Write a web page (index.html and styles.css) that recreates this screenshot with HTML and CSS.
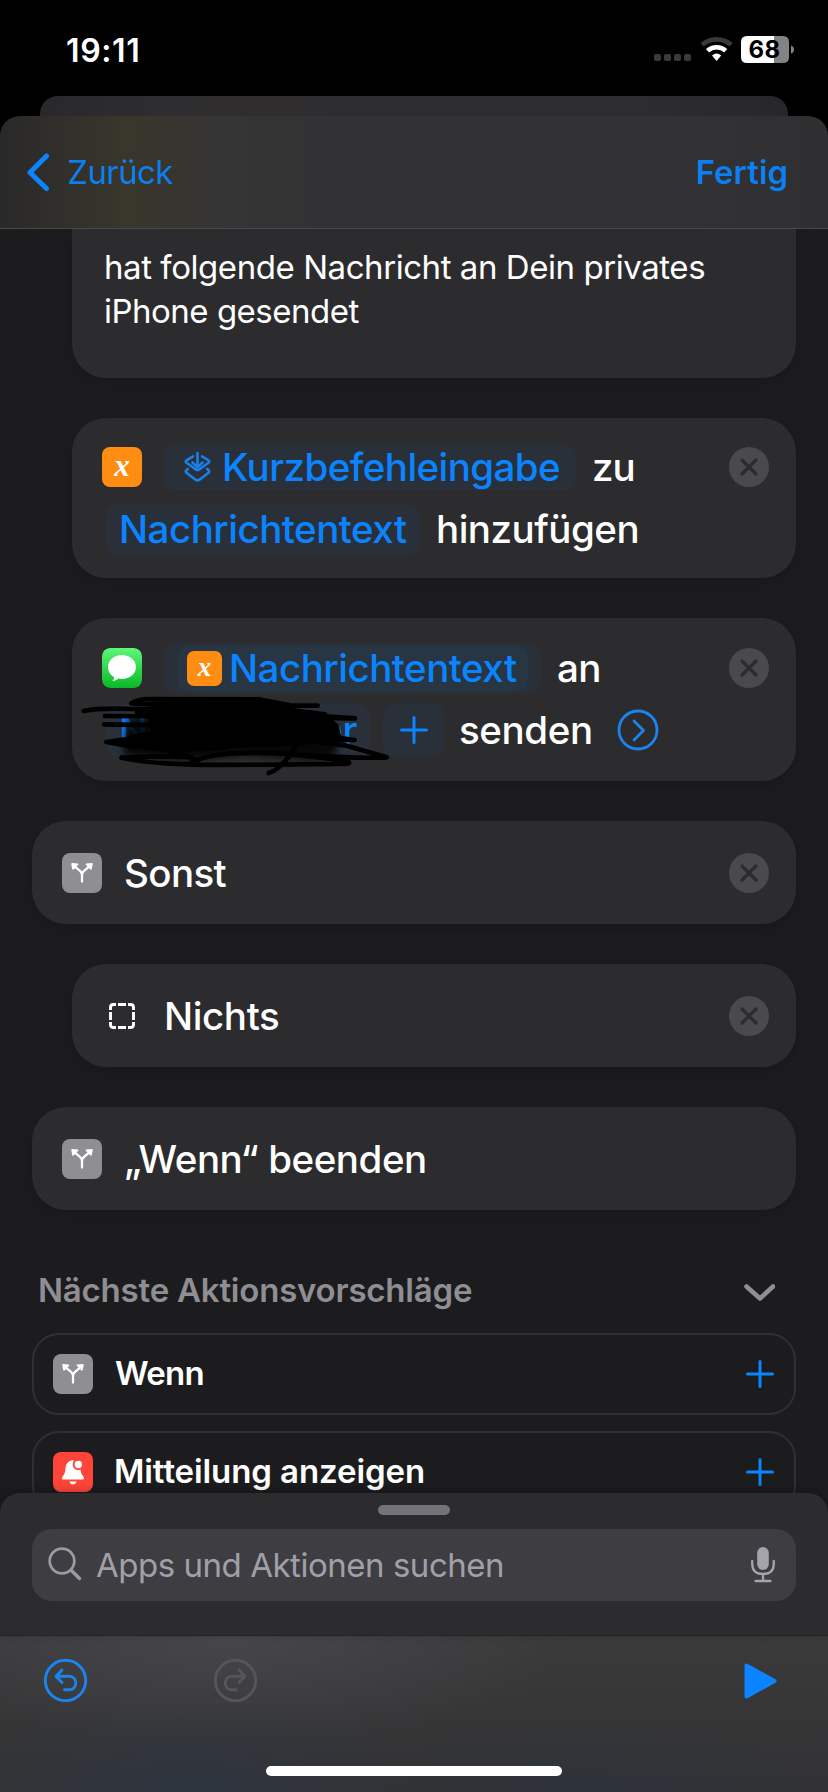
FILE: index.html
```html
<!DOCTYPE html>
<html lang="de">
<head>
<meta charset="utf-8">
<title>Kurzbefehle</title>
<link rel="stylesheet" href="styles.css">
</head>
<body>
<svg class="defs" width="0" height="0" aria-hidden="true">
  <symbol id="branch" viewBox="0 0 40 40">
    <path d="M20 28.5V22Q20 19.5 18 17.8L13.5 14.2M20 22Q20 19.5 22 17.8L26.500 14.200" fill="none" stroke="#fff" stroke-width="2.300" stroke-linecap="round"/>
    <path d="M9.300 11.300Q9 10 10.300 10L15.800 10.400Q17 10.700 16.200 11.700L11.600 16.400Q10.600 17.200 10.200 16Z M30.700 11.300Q31 10 29.700 10L24.200 10.400Q23 10.700 23.800 11.700L28.400 16.400Q29.400 17.200 29.800 16Z" fill="#fff"/>
  </symbol>
  <symbol id="close" viewBox="0 0 40 40">
    <circle cx="20" cy="20" r="20" fill="#4a4a4d"/>
    <path d="M13 13L27 27M27 13L13 27" stroke="#2c2c2e" stroke-width="3.200" stroke-linecap="round"/>
  </symbol>
  <symbol id="plus" viewBox="0 0 28 28">
    <path d="M14 1.500V26.500M1.500 14H26.500" stroke="#0a84ff" stroke-width="3" stroke-linecap="round"/>
  </symbol>
</svg>

<div class="phone">
  <header class="status">
    <span class="clock">19:11</span>
    <svg class="status-icons" width="144" height="30" viewBox="0 0 144 30">
      <g fill="#3a3a3a">
        <rect x="1" y="19" width="7" height="7" rx="2"/><rect x="11" y="19" width="7" height="7" rx="2"/>
        <rect x="21" y="19" width="7" height="7" rx="2"/><rect x="31" y="19" width="7" height="7" rx="2"/>
      </g>
      <g fill="none">
        <path d="M49 9.800A22.300 22.300 0 0 1 78.200 9.800" stroke="#3a3a3a" stroke-width="4.600"/>
        <path d="M54.500 15.800A13.600 13.600 0 0 1 72.700 15.800" stroke="#fff" stroke-width="4.600"/>
      </g>
      <path d="M59 20.500Q63.600 16.700 68.200 20.500L63.600 26Z" fill="#fff"/>
      <path d="M94 1H121V28H94Q88 28 88 22V7Q88 1 94 1Z" fill="#fff"/>
      <path d="M121 1H130Q136 1 136 7V22Q136 28 130 28H121Z" fill="#838383"/>
      <path d="M138 10.500Q141 11.500 141 14.500T138 18.500Z" fill="#838383"/>
      <text x="95.500" y="23.300" class="battery">68</text>
    </svg>
  </header>
  <div class="back-sheet"></div>
  <nav class="nav">
    <svg width="24" height="40" viewBox="0 0 24 40"><path d="M20.500 4L4 20.500L20.500 36.500" fill="none" stroke="#0a84ff" stroke-width="5" stroke-linecap="round" stroke-linejoin="round"/></svg>
    <span class="back">Zurück</span>
    <span class="done">Fertig</span>
  </nav>

  <main class="content">
    <section class="card card-text">hat folgende Nachricht an Dein privates<br><span class="tight">iPhone gesendet</span></section>

    <section class="card card-append">
      <div class="row">
        <span class="icon orange"><i>x</i></span>
        <span class="pill pill-input">
          <svg width="27" height="32" viewBox="0 0 27 32" fill="none" stroke="#1a7fe6" stroke-width="2.600" stroke-linecap="round" stroke-linejoin="round">
            <path d="M13.500 2V16M8.500 11.500L13.500 16.500L18.500 11.500"/>
            <path d="M9 5.300L2.500 9.400Q1 10.600 2.500 11.800L11.500 18.300Q13.500 19.600 15.500 18.300L24.500 11.800Q26 10.600 24.500 9.400L18 5.300"/>
            <path d="M3.800 18L2.500 19.200Q1 20.600 2.500 21.800L11.500 28.700Q13.500 30 15.500 28.700L24.500 21.800Q26 20.600 24.500 19.200L23.200 18"/>
          </svg>
          <span>Kurzbefehleingabe</span>
        </span>
        <span class="word zu">zu</span>
        <svg class="close" width="40" height="40"><use href="#close"/></svg>
      </div>
      <div class="row second">
        <span class="pill pill-var">Nachrichtentext</span>
        <span class="word">hinzufügen</span>
      </div>
    </section>

    <section class="card card-send">
      <div class="row">
        <svg class="icon" width="40" height="40" viewBox="0 0 40 40">
          <defs><linearGradient id="green" x2="0" y2="1"><stop offset="0" stop-color="#5ff777"/><stop offset="1" stop-color="#09b827"/></linearGradient></defs>
          <rect width="40" height="40" rx="8" fill="url(#green)"/>
          <path d="M20 7C12.200 7 6 12.200 6 19C6 23.300 8.400 26.900 12 29C12.200 30.800 11.500 32 10.200 33C12.800 32.900 15 32 16.300 30.600C17.500 30.900 18.700 31 20 31C27.800 31 34 25.800 34 19S27.800 7 20 7Z" fill="#fff"/>
        </svg>
        <span class="pill pill-outer"><span class="pill pill-inner"><span class="icon orange small"><i>x</i></span><span>Nachrichtentext</span></span></span>
        <span class="word an">an</span>
        <svg class="close" width="40" height="40"><use href="#close"/></svg>
      </div>
      <div class="row second">
        <span class="pill pill-name"><span>N</span><span>er</span></span>
        <span class="pill pill-plus"><svg width="28" height="28"><use href="#plus"/></svg></span>
        <span class="word senden">senden</span>
        <svg class="go" width="42" height="42" viewBox="0 0 42 42" fill="none" stroke="#1a84f0" stroke-width="2.800" stroke-linecap="round" stroke-linejoin="round"><circle cx="21" cy="21" r="19"/><path d="M17 12L26.500 21.500L17 31"/></svg>
      </div>
      <svg class="scribble" width="320" height="110" viewBox="0 0 960 330">
        <defs><filter id="soft" x="-10%" y="-30%" width="120%" height="160%"><feGaussianBlur stdDeviation="9"/></filter></defs>
        <path d="M142 135L240 120L640 118L775 160L768 240L700 255L500 240L330 255L130 240L135 190Z" fill="#000" opacity=".85" filter="url(#soft)"/>
        <path d="M165 100L400 72L620 98L735 118L775 148L785 192L660 212L440 220L200 218L110 206L150 180L212 168L205 128L165 128Z" fill="#000"/>
        <g fill="none" stroke="#000" stroke-width="14" stroke-linecap="round" stroke-linejoin="round">
          <path d="M713 92L630 91L535 73L200 72Q165 76 154 85Q190 92 330 82L520 80L620 104L735 118L630 128L75 123"/>
          <path d="M11 108Q60 98 160 102L520 110L825 130L600 128"/>
          <path d="M72 148L300 152L600 140L740 150Q770 160 755 166L640 170L824 195L700 196L500 170"/>
          <path d="M79 201L240 178L540 180L800 212L920 247Q860 252 640 238T350 256Q300 230 240 222L140 212L79 201"/>
          <path d="M125 248Q190 262 260 265L320 268Q400 272 805 266Q815 262 790 256L640 238"/>
          <path d="M433 218L300 224L180 212M320 268L352 260Q320 240 270 228"/>
          <path d="M650 205Q630 250 590 282Q580 290 566 294"/>
          <path d="M125 248L220 244L320 246M480 78L535 72"/>
        </g>
      </svg>
    </section>

    <section class="card card-line outdent">
      <svg class="icon gray" width="40" height="40"><use href="#branch"/></svg>
      <span class="title sonst">Sonst</span>
      <svg class="close" width="40" height="40"><use href="#close"/></svg>
    </section>
    <section class="card card-line">
      <svg class="icon" width="40" height="40" viewBox="0 0 40 40" fill="none" stroke="#fff" stroke-width="2.900">
        <path d="M8.500 14V11.500Q8.500 8.500 11.500 8.500H14M26 8.500H28.500Q31.500 8.500 31.500 11.500V14M31.500 26V28.500Q31.500 31.500 28.500 31.500H26M14 31.500H11.500Q8.500 31.500 8.500 28.500V26M16 8.500H24M16 31.500H24M8.500 16V24M31.500 16V24"/>
      </svg>
      <span class="title nichts">Nichts</span>
      <svg class="close" width="40" height="40"><use href="#close"/></svg>
    </section>
    <section class="card card-line outdent">
      <svg class="icon gray" width="40" height="40"><use href="#branch"/></svg>
      <span class="title ende">„Wenn“ beenden</span>
    </section>

    <div class="heading">
      <span>Nächste Aktionsvorschläge</span>
      <svg width="32" height="20" viewBox="0 0 32 20"><path d="M3.500 3.500L17 15.500L30 3.500" fill="none" stroke="#8e8e93" stroke-width="4.600" stroke-linecap="round" stroke-linejoin="round"/></svg>
    </div>
    <div class="suggestion">
      <svg class="icon gray" width="40" height="40"><use href="#branch"/></svg>
      <span class="wenn">Wenn</span>
      <svg width="28" height="28"><use href="#plus"/></svg>
    </div>
    <div class="suggestion">
      <svg class="icon red" width="40" height="40" viewBox="0 0 40 40">
        <path d="M20 8C14.800 8.700 12.700 12.500 12.500 16.500C12.300 20.500 11.500 22 9.800 24.200C8.300 26.200 9 27.500 10.500 27.500H29.500C31 27.500 31.700 26.200 30.200 24.200C28.500 22 27.700 20.500 27.500 17Z" fill="#fff"/>
        <path d="M16.300 29.500H23.700Q22.500 32.500 20 32.500T16.300 29.500Z" fill="#fff"/>
        <circle cx="25.300" cy="12.500" r="4.700" fill="#fff" stroke="#ff453a" stroke-width="2"/>
      </svg>
      <span>Mitteilung anzeigen</span>
      <svg width="28" height="28"><use href="#plus"/></svg>
    </div>
  </main>

  <section class="panel">
    <div class="grabber"></div>
    <div class="search">
      <svg width="36" height="36" viewBox="0 0 36 36" fill="none" stroke="#9c9ba2" stroke-linecap="round"><circle cx="14" cy="14" r="12.300" stroke-width="2.700"/><path d="M23.200 23.200L31.500 31.500" stroke-width="3.400"/></svg>
      <span>Apps und Aktionen suchen</span>
      <svg width="26" height="36" viewBox="0 0 26 36"><rect x="7.200" y="0" width="11.600" height="23" rx="5.800" fill="#a5a4ac"/><path d="M2.200 14V16.500Q2.200 27 13 27T23.800 16.500V14M13 27V34M5.500 34H20.500" fill="none" stroke="#a5a4ac" stroke-width="2.300" stroke-linecap="round"/></svg>
    </div>
  </section>
  <footer class="toolbar">
    <div class="tools">
      <svg width="44" height="44" viewBox="0 0 44 44" fill="none" stroke="#1a84ef" stroke-width="2.900" stroke-linecap="round" stroke-linejoin="round"><circle cx="21.500" cy="22.500" r="20.200"/><path d="M18 12L12 18.300L18 24.500M12.300 18.300H25C34 18.300 34 31.800 25 31.800H20.500"/></svg>
      <svg class="redo" width="44" height="44" viewBox="0 0 44 44" fill="none" stroke="#565658" stroke-width="2.900" stroke-linecap="round" stroke-linejoin="round"><circle cx="21.500" cy="22.500" r="20.200"/><path d="M25 12L31 18.300L25 24.500M30.700 18.300H18C9 18.300 9 31.800 18 31.800H22.500"/></svg>
      <svg class="play" width="33" height="38" viewBox="0 0 33 38"><path d="M2.500 3.500V34.500L30.500 19Z" fill="#0a84ff" stroke="#0a84ff" stroke-width="4" stroke-linejoin="round"/></svg>
    </div>
    <div class="home"></div>
  </footer>
</div>
</body>
</html>
```
FILE: styles.css
```css
* { box-sizing: border-box; }
body { margin: 0; background: #000; }
svg { display: block; flex: none; }
.defs { position: absolute; }

.phone {
  width: 828px; height: 1792px; overflow: hidden;
  display: flex; flex-direction: column;
  background: #000; color: #fff;
  font: 400 33px/44px Inter, sans-serif;
}

/* status bar */
.status { height: 96px; flex: none; display: flex; justify-content: space-between; padding: 35px 31px 0 66px; }
.clock { font-size: 32px; font-weight: 600; line-height: 31px; letter-spacing: .6px; }
.battery { font: 700 24px Inter, sans-serif; fill: #000; letter-spacing: .4px; }

/* sheet header */
.back-sheet {
  height: 44px; margin: 0 40px -24px; flex: none; border-radius: 18px 18px 0 0;
  background: linear-gradient(90deg, #29292b, #2d2d2f 15%, #302d2e 30%, #2d2d2f 40%, #2d2d2f 80%, #272729);
}
.nav {
  position: relative; height: 113px; flex: none; display: flex; align-items: center;
  padding: 0 40px 0 26px; border-radius: 20px 20px 0 0; border-bottom: 1px solid #48484a; color: #0a84ff;
  background: linear-gradient(90deg, #2a2929 0, #302f2b 60px, #39362b 125px, #373530 180px, #353535 220px, #323234 330px, #323234 700px, #2f2f31 828px);
}
.nav span { opacity: .95; }
.back { margin-left: 17px; letter-spacing: -.6px; }
.done { margin-left: auto; font-weight: 600; }

/* action list */
.content {
  height: 1284px; flex: none; overflow: hidden; padding: 0 32px;
  display: flex; flex-direction: column; background: #1c1c1e;
}
.card {
  position: relative; flex: none; margin: 0 0 40px 40px; border-radius: 34px;
  background: #2c2c2e; box-shadow: 0 4px 14px rgba(0, 0, 0, .16);
}
.card.outdent { margin-left: 0; }
.card-text { height: 149px; padding: 16px 32px; border-radius: 0 0 34px 34px; letter-spacing: -.44px; }
.tight { letter-spacing: -.5px; }
.card-append { height: 160px; padding-top: 18px; }
.card-send { height: 163px; padding-top: 19px; }
.row { height: 62px; display: flex; align-items: center; padding: 0 27px 0 30px; font-size: 38.5px; font-weight: 500; letter-spacing: -.5px; }
.row.second { padding-left: 34px; }
.icon { width: 40px; height: 40px; flex: none; border-radius: 8px; }
.orange { background: #ff8d12; display: flex; justify-content: center; color: #fff; }
.orange i { font: italic 700 31px/37px "Liberation Serif", serif; letter-spacing: 0; }
.orange.small { width: 35px; height: 35px; border-radius: 7px; margin-right: 7px; }
.orange.small i { font-size: 27px; line-height: 32px; }
.gray { background: #8e8e93; }
.red { background: #ff453a; }
.close { margin-left: auto; }
.pill { display: flex; align-items: center; border-radius: 13px; background: #2a3039; color: #0a84ff; flex: none; }
.pill-input { width: 412px; height: 45px; margin-left: 22px; padding-left: 20px; gap: 11px; border-radius: 10px; letter-spacing: -.57px; }
.pill-var { width: 314px; height: 51px; padding-left: 13px; }
.pill-outer { width: 377px; height: 51px; margin-left: 22px; padding: 0 13px 0 14px; }
.pill-inner { width: 350px; height: 45px; padding-left: 9px; border-radius: 10px; background: #283543; }
.pill-name { width: 264px; height: 54px; padding: 0 13px; justify-content: space-between; }
.pill-plus { width: 61px; height: 54px; margin-left: 13px; justify-content: center; }
.word { margin-left: 16px; }
.zu { letter-spacing: -1px; }
.senden { margin-left: 15px; letter-spacing: -.38px; }
.go { margin-left: 24px; }
.scribble { position: absolute; left: 8px; top: 57px; overflow: visible; }

.card-line { height: 103px; display: flex; align-items: center; padding: 0 27px 0 30px; font-size: 38.5px; font-weight: 500; }
.title { margin-left: 22px; padding-top: 1px; }
.sonst { letter-spacing: -.6px; }
.nichts { letter-spacing: -.39px; }
.ende { letter-spacing: -.45px; }

.heading {
  height: 83px; flex: none; display: flex; justify-content: space-between; align-items: flex-start;
  padding: 18px 21px 0 6px; font-weight: 600; color: #8e8e93; letter-spacing: -.21px;
}
.heading svg { margin-top: 15px; }
.suggestion {
  height: 82px; flex: none; display: flex; align-items: center; margin-bottom: 16px; padding: 0 20px 0 19px;
  border: 2px solid #303032; border-radius: 27px; font-weight: 600;
}
.suggestion span { margin: -2px auto 0 21px; letter-spacing: -.1px; }
.suggestion .wenn { letter-spacing: -.7px; margin-left: 22px; }

/* search panel */
.panel {
  position: relative; height: 143px; flex: none; margin-top: -20px; padding: 12px 32px 0;
  border-radius: 20px 20px 0 0; background: #2c2c2e; border-bottom: 1px solid #242426;
  box-shadow: 0 -2px 10px rgba(0, 0, 0, .25);
}
.grabber { width: 72px; height: 10px; margin: 0 auto 14px; border-radius: 5px; background: #747379; }
.search {
  height: 72px; display: flex; align-items: center; padding: 0 20px 0 16px; border-radius: 20px;
  background: #3e3d42; color: #a1a0a8; letter-spacing: -.47px;
}
.search span { margin: 0 auto 0 12px; }

/* toolbar */
.toolbar {
  flex: 1; display: flex; flex-direction: column; align-items: center;
  background:
    radial-gradient(ellipse 240px 90px at 190px 100%, rgba(45, 53, 66, .8), transparent),
    radial-gradient(ellipse 240px 70px at 590px 100%, rgba(45, 51, 60, .8), transparent),
    radial-gradient(ellipse 340px 110px at 230px 0, rgba(76, 76, 80, .7), transparent),
    linear-gradient(#3a3a3b, #323234);
}
.tools { width: 100%; height: 130px; display: flex; align-items: flex-start; padding: 22px 51px 0 44px; }
.redo { margin-left: 126px; }
.play { margin: 4px 0 0 auto; }
.home { width: 296px; height: 10px; border-radius: 5px; background: #fff; }
```
